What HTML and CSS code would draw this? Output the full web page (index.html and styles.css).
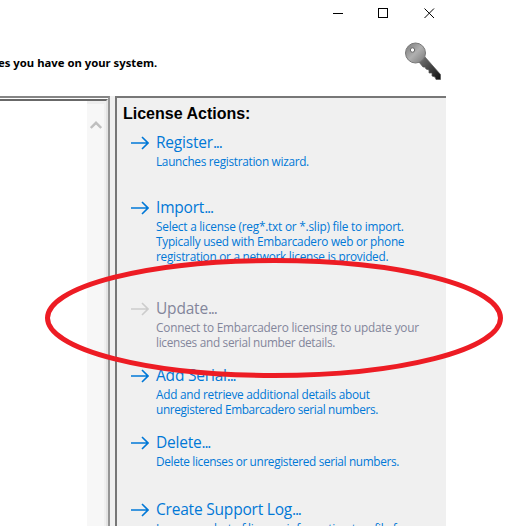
FILE: index.html
```
<!DOCTYPE html>
<html lang="en">
<head>
<meta charset="utf-8">
<title>License Manager</title>
<link rel="stylesheet" href="styles.css">
</head>
<body>
<div class="window">
  <header class="header">
    <div class="controls">
      <svg width="11" height="11" viewBox="0 0 11 11"><path d="M0 5.5h10"/></svg>
      <svg width="11" height="11" viewBox="0 0 11 11"><path d="M.5.5h9v9h-9z"/></svg>
      <svg class="close" width="11" height="11" viewBox="0 0 11 11"><path d="M.5.5l9.5 9.5M10 .5L.5 10"/></svg>
    </div>
    <div class="banner">
      <p class="intro">es you have on your system.</p>
      <svg class="key" width="38" height="39" viewBox="0 0 38 39">
        <defs>
          <linearGradient id="bow" x1="0" y1="0" x2="1" y2="1"><stop offset="0" stop-color="#777"/><stop offset=".5" stop-color="#b0b0b0"/><stop offset="1" stop-color="#777"/></linearGradient>
          <linearGradient id="shaft" x1="0" y1="0" x2="1" y2="1"><stop offset="0" stop-color="#777"/><stop offset="1" stop-color="#111"/></linearGradient>
        </defs>
        <path d="M15 20L21 15L36.500 32.500V37.500H32L31 35L28 34L28 31L25 31L25 28L22 27L21 25H19Z" fill="url(#shaft)" stroke="#555" stroke-width=".7"/>
        <circle cx="11.500" cy="11" r="10" fill="url(#bow)" stroke="#777"/>
        <circle cx="8.500" cy="8" r="2.200" fill="#fff" stroke="#666"/>
      </svg>
    </div>
  </header>
  <main class="panes">
    <section class="list"><div class="inner"><div class="scroll"><svg width="12" height="10" viewBox="0 0 12 10"><path d="M.8 8L6 2.800L11.200 8"/></svg></div></div></section>
    <section class="actions">
      <h1>License Actions:</h1>
      <div class="action a1"><svg class="arrow" width="18" height="14" viewBox="0 0 18 14"><path d="M0 7h17M11 1l6 6-6 6"/></svg><div><h2>Register<span>...</span></h2><p class="l1">Launches registration wizard.</p></div></div>
      <div class="action a2"><svg class="arrow" width="18" height="14" viewBox="0 0 18 14"><path d="M0 7h17M11 1l6 6-6 6"/></svg><div><h2>Import<span>...</span></h2><p class="l2">Select a license (reg*.txt or *.slip) file to import.</p><p class="l3">Typically used with Embarcadero web or phone</p><p class="l4">registration or a network license is provided.</p></div></div>
      <div class="action a3 disabled"><svg class="arrow" width="18" height="14" viewBox="0 0 18 14"><path d="M0 7h17M11 1l6 6-6 6"/></svg><div><h2>Update<span>...</span></h2><p class="l5">Connect to Embarcadero licensing to update your</p><p class="l6">licenses and serial number details.</p></div></div>
      <div class="action a4"><svg class="arrow" width="18" height="14" viewBox="0 0 18 14"><path d="M0 7h17M11 1l6 6-6 6"/></svg><div><h2>Add Serial<span>...</span></h2><p class="l7">Add and retrieve additional details about</p><p class="l8">unregistered Embarcadero serial numbers.</p></div></div>
      <div class="action a5"><svg class="arrow" width="18" height="14" viewBox="0 0 18 14"><path d="M0 7h17M11 1l6 6-6 6"/></svg><div><h2>Delete<span>...</span></h2><p class="l9">Delete licenses or unregistered serial numbers.</p></div></div>
      <div class="action a6"><svg class="arrow" width="18" height="14" viewBox="0 0 18 14"><path d="M0 7h17M11 1l6 6-6 6"/></svg><div><h2>Create Support Log<span>...</span></h2><p class="l10">Logs snapshot of license information to a file for</p></div></div>
    </section>
  </main>
  <svg class="ring" width="527" height="526" viewBox="0 0 527 526"><ellipse cx="274" cy="318" rx="226.500" ry="57.500"/></svg>
</div>
</body>
</html>
```
FILE: styles.css
```
* { box-sizing: border-box; }
body { margin: 0; background: #fff; overflow: hidden; }
h1, h2, p { margin: 0; }
svg { display: block; fill: none; flex: none; }
.window { position: relative; width: 527px; height: 526px; overflow: hidden; font-family: "Open Sans", "Noto Sans", sans-serif; }
.header { height: 96px; width: 446px; }
.controls { display: flex; gap: 34px; height: 40px; padding: 8px 0 0 333px; }
.controls svg { stroke: #000; stroke-width: 1; shape-rendering: crispEdges; }
.controls .close { shape-rendering: auto; margin-left: 1px; }
.banner { display: flex; justify-content: space-between; padding-right: 4px; }
.intro { padding-top: 15px; font: bold 11.3px/16px "Noto Sans", sans-serif; white-space: nowrap; margin-left: -2px; }
.key { margin-top: 2px; }
.panes { display: flex; height: 430px; width: 446px; background: #f0f0f0; }
.list { width: 110px; border-top: 2px solid #858585; border-right: 2px solid #959595; padding: 1px 0 0 0; background: #fff; }
.inner { height: 100%; border-top: 2px solid #686868; border-right: 2px solid #e3e3e3; display: flex; justify-content: flex-end; }
.scroll { width: 19px; background: #f7f7f7; border-top: 3px solid #eee; border-right: 2px solid #f0f0f0; padding: 16px 0 0 3px; }
.scroll svg { stroke: #bfbfbf; stroke-width: 2.400; }
.actions { width: 331px; margin-left: 5px; border-top: 2px solid #777; border-left: 2px solid #777; overflow: hidden; }
h1 { font: bold 16px/20px "Liberation Sans", sans-serif; padding: 6px 0 0 6px; }
.action { display: flex; gap: 7px; padding-left: 14px; color: #0078d7; }
.arrow { stroke: currentColor; stroke-width: 1.600; margin-top: 5px; }
h2 { font-size: 15.5px; line-height: 22px; padding-bottom: 1px; font-weight: 400; white-space: nowrap; letter-spacing: -.2px; }
h2 span { letter-spacing: -1.2px; }
.action p { font-size: 11.8px; line-height: 15px; white-space: nowrap; width: max-content; }
.action .l1 { letter-spacing: -.29px; }
.action .l2 { letter-spacing: -.21px; }
.action .l3 { letter-spacing: -.26px; }
.action .l4 { letter-spacing: -.26px; }
.action .l5 { letter-spacing: -.2px; }
.action .l6 { letter-spacing: -.3px; }
.action .l7 { letter-spacing: -.26px; }
.action .l8 { letter-spacing: -.35px; }
.action .l9 { letter-spacing: -.34px; }
.action .l10 { letter-spacing: -.26px; }
.a1 { margin-top: 7px; height: 65px; }
.a2 { height: 101px; }
.a3, .a4, .a5 { height: 67px; }
.disabled { color: #83869b; }
.disabled .arrow { color: #ccc; }
.ring { position: absolute; inset: 0; stroke: #ed1c24; stroke-width: 5; }
```
